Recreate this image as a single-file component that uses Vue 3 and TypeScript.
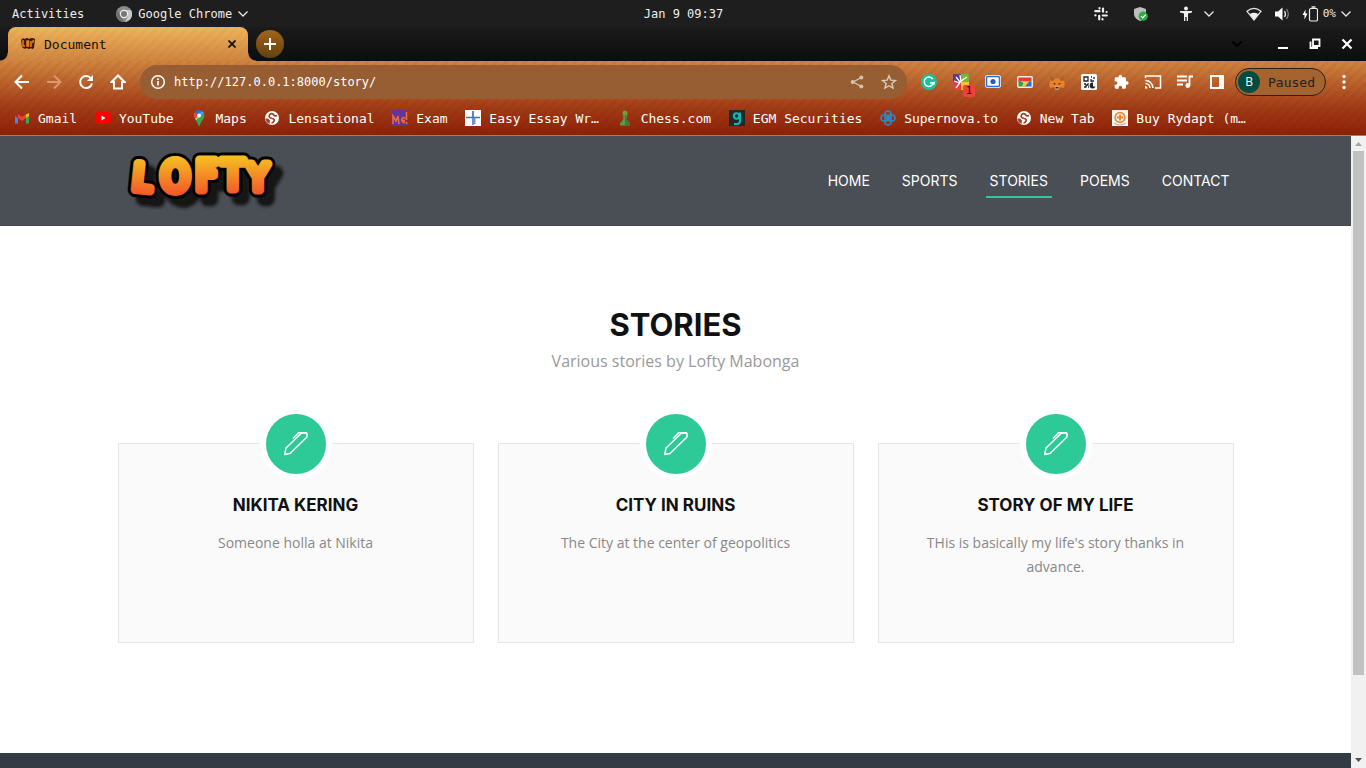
<script setup lang="ts">
import { ref } from 'vue'

interface Bookmark {
  icon: string
  label: string
}

interface Story {
  title: string
  text: string
}

const address = ref('http://127.0.0.1:8000/story/')

const bookmarks: Bookmark[] = [
  { icon: 'gmail', label: 'Gmail' },
  { icon: 'youtube', label: 'YouTube' },
  { icon: 'maps', label: 'Maps' },
  { icon: 'globe', label: 'Lensational' },
  { icon: 'exam', label: 'Exam' },
  { icon: 'essay', label: 'Easy Essay Wr…' },
  { icon: 'chess', label: 'Chess.com' },
  { icon: 'egm', label: 'EGM Securities' },
  { icon: 'supernova', label: 'Supernova.to' },
  { icon: 'globe', label: 'New Tab' },
  { icon: 'rydapt', label: 'Buy Rydapt (m…' },
]

const links: string[] = ['HOME', 'SPORTS', 'STORIES', 'POEMS', 'CONTACT']
const active = ref('STORIES')

const stories: Story[] = [
  { title: 'NIKITA KERING', text: 'Someone holla at Nikita' },
  { title: 'CITY IN RUINS', text: 'The City at the center of geopolitics' },
  { title: 'STORY OF MY LIFE', text: "THis is basically my life's story thanks in advance." },
]
</script>

<template>
  <div class="desktop">
    <header class="system">
      <div class="system-left">
        <button type="button" class="sys-btn">Activities</button>
        <button type="button" class="sys-btn app-menu">
          <svg width="16" height="16" viewBox="0 0 16 16"><circle cx="8" cy="8" r="8" fill="#8a8a8a" /><path d="M8 4h7A8 8 0 0 1 9 16l3-6z" fill="#c9c9c9" /><path d="M1 4l4 6 3 6A8 8 0 0 1 1 4z" fill="#707070" /><circle cx="8" cy="8" r="4.2" fill="#eee" /><circle cx="8" cy="8" r="3" fill="#777" /></svg>
          <span>Google Chrome</span>
          <svg width="10" height="6" viewBox="0 0 10 6"><path d="M.5.5L5 5 9.500.5" fill="none" stroke="#e8e8e8" stroke-width="1.3" /></svg>
        </button>
      </div>
      <time class="clock">Jan 9 09:37</time>
      <div class="system-right">
        <svg class="tray" width="16" height="16" viewBox="0 0 16 16" stroke="#eee" stroke-width="2.2" stroke-linecap="round"><path d="M6.500 2.200v.2M6.500 5.200H2.300M10 2.500v3.200M13.500 6h.1M9.800 9.500h4M9.500 13v.4M6.200 9.800v3.500M2.300 9.300h.2" /></svg>
        <svg class="tray" width="16" height="16" viewBox="0 0 16 16"><path d="M7 1l6 2v5c0 3-2.500 5.500-6 7-3.500-1.500-6-4-6-7V3z" fill="#bdbdbd" /><circle cx="10.200" cy="10.200" r="4.600" fill="#31a846" /><path d="M8 10.200l1.700 1.700 3-3.200" fill="none" stroke="#fff" stroke-width="1.200" /></svg>
        <div class="tray-pair">
          <svg width="14" height="16" viewBox="0 0 14 16" fill="#eee"><circle cx="7" cy="2.500" r="2" /><path d="M1 5h12v1.600L9 7.500V15H7.700v-4H6.300v4H5V7.500L1 6.600z" /></svg>
          <svg width="10" height="6" viewBox="0 0 10 6"><path d="M.5.5L5 5 9.500.5" fill="none" stroke="#e8e8e8" stroke-width="1.300" /></svg>
        </div>
        <button type="button" class="sys-btn status" aria-label="System menu">
          <svg width="16" height="14" viewBox="0 0 16 14"><path d="M1 4.300Q8-1.500 15 4.300L8 13z" fill="none" stroke="#e6e6e6" stroke-width="1.200" /><path d="M3.800 7Q8 4.600 12.200 7L8 12.800z" fill="#f2f2f2" /></svg>
          <svg width="16" height="14" viewBox="0 0 16 14"><path d="M1 4.500h3L8.500.5v13L4 9.500H1z" fill="#fff" /><path d="M10.500 4q2 3 0 6" fill="none" stroke="#eee" stroke-width="1.300" /><path d="M12.500 2q3.500 5 0 10" fill="none" stroke="#888" stroke-width="1.200" /></svg>
          <span class="battery">
            <svg width="16" height="16" viewBox="0 0 16 16"><path d="M3.500 3.500L.5 9h2v4.500l3-6h-2z" fill="#fff" /><rect x="7.500" y="2.500" width="8" height="12.500" rx="1.500" fill="none" stroke="#eee" stroke-width="1.200" /><path d="M9.500 1h4" stroke="#eee" stroke-width="1.500" /></svg>
            <span class="percent">0%</span>
            <svg width="10" height="6" viewBox="0 0 10 6"><path d="M.5.5L5 5 9.500.5" fill="none" stroke="#e8e8e8" stroke-width="1.300" /></svg>
          </span>
        </button>
      </div>
    </header>

    <section class="browser">
      <div class="tabstrip">
        <div class="tab">
          <svg width="16" height="16" viewBox="0 0 16 16"><path d="M1 4q2-3 4-1 2-2 4 0 3-2 6 0l-1 9q-2 2-3 0-2 2-4 0-3 2-5-1z" fill="#3a1c06" /><path d="M3 4v6h2M7 5v5h1.500V5zM11 5v6M13.500 4l-1 3" fill="none" stroke="#ef7d22" stroke-width="1.500" /></svg>
          <span class="tab-title">Document</span>
          <button type="button" class="tab-close" aria-label="Close tab">
            <svg width="8" height="8" viewBox="0 0 8 8"><path d="M.5.5l7 7M7.500.5l-7 7" stroke="#111" stroke-width="1.700" /></svg>
          </button>
        </div>
        <button type="button" class="new-tab" aria-label="New tab">
          <svg width="12" height="12" viewBox="0 0 12 12"><path d="M6 0v12M0 6h12" stroke="#fff" stroke-width="2" /></svg>
        </button>
        <div class="window-buttons">
          <button type="button" class="search-tabs" aria-label="Search tabs">
            <svg width="10" height="6" viewBox="0 0 10 6"><path d="M.5.5L5 5 9.500.5" fill="none" stroke="#000" stroke-width="2" /></svg>
          </button>
          <button type="button" aria-label="Minimize">
            <svg width="12" height="12" viewBox="0 0 12 12"><path d="M1 10h10" stroke="#fff" stroke-width="2" /></svg>
          </button>
          <button type="button" aria-label="Restore">
            <svg width="12" height="12" viewBox="0 0 12 12" fill="none" stroke="#fff" stroke-width="1.800"><path d="M4 1.500h6.500V8H4zM1.500 3.500V10H9" /></svg>
          </button>
          <button type="button" aria-label="Close">
            <svg width="12" height="12" viewBox="0 0 12 12"><path d="M1.500 1.500l9 9M10.500 1.500l-9 9" stroke="#fff" stroke-width="2.200" /></svg>
          </button>
        </div>
      </div>

      <div class="controls">
        <div class="toolbar">
          <button type="button" class="tool" aria-label="Back"><svg width="16" height="16" viewBox="0 0 16 16" fill="none" stroke="#fff" stroke-width="2"><path d="M15 8H2M8 1.500L1.500 8 8 14.500" /></svg></button>
          <button type="button" class="tool" aria-label="Forward"><svg width="16" height="16" viewBox="0 0 16 16" fill="none" stroke="#d99a70" stroke-width="2"><path d="M1 8h13M8 1.500L14.500 8 8 14.500" /></svg></button>
          <button type="button" class="tool" aria-label="Reload"><svg width="16" height="16" viewBox="0 0 16 16"><path d="M13 4.500A6 6 0 1 0 14 9.500" fill="none" stroke="#fff" stroke-width="2" /><path d="M15 1v6H9z" fill="#fff" /></svg></button>
          <button type="button" class="tool" aria-label="Home"><svg width="16" height="16" viewBox="0 0 16 16"><path d="M8 1.500L1.500 8H4v6.500h8V8h2.500z" fill="none" stroke="#fff" stroke-width="2" /></svg></button>

          <div class="omnibox">
            <svg width="16" height="16" viewBox="0 0 16 16"><circle cx="8" cy="8" r="6.300" fill="none" stroke="#fff" stroke-width="1.500" /><path d="M8 7v4.500M8 4.300v1.600" stroke="#fff" stroke-width="1.700" /></svg>
            <input v-model="address" type="text" aria-label="Address" />
            <button type="button" class="tool" aria-label="Share"><svg width="14" height="14" viewBox="0 0 14 14"><path d="M11.500 2.500L3 7l8.500 4.500" fill="none" stroke="#d6c4b3" stroke-width="1.400" /><g fill="#d6c4b3"><circle cx="11.300" cy="2.500" r="2" /><circle cx="2.700" cy="7" r="2" /><circle cx="11.300" cy="11.500" r="2" /></g></svg></button>
            <button type="button" class="tool" aria-label="Bookmark this page"><svg width="16" height="16" viewBox="0 0 16 16"><path d="M8 1.800l1.800 4.300 4.700.4-3.600 3 1.100 4.600L8 11.700 4 14.100l1.100-4.600-3.600-3 4.700-.4z" fill="none" stroke="#dccbbb" stroke-width="1.400" /></svg></button>
          </div>

          <div class="extensions">
            <button type="button" class="tool" aria-label="Grammar"><svg width="16" height="16" viewBox="0 0 16 16"><circle cx="8" cy="8" r="8" fill="#15c39a" /><path d="M11.800 5A4.700 4.700 0 1 0 12.500 9H9" fill="none" stroke="#fff" stroke-width="1.500" /><path d="M10.700 8.500l2.500-.2-.4 2.600" fill="none" stroke="#fff" stroke-width="1.200" /></svg></button>
            <button type="button" class="tool badged" aria-label="Notes, 1 item">
              <svg width="16" height="16" viewBox="0 0 16 16"><path d="M0 0h8v8H0z" fill="#5a3b94" /><path d="M8 0h8v8H8z" fill="#74b82f" /><path d="M0 8h8v8H0z" fill="#ed3b3b" /><path d="M8 8h8v8H8z" fill="#f5c431" /><path d="M3 14l5-7 6-4M8 8L7 1M7 8L3 3M7 9L1 7" stroke="#fff" stroke-width="1.300" fill="none" /></svg>
              <span class="badge">1</span>
            </button>
            <button type="button" class="tool" aria-label="Screenshot"><svg width="16" height="16" viewBox="0 0 16 16"><rect y="1" width="16" height="13" rx="3" fill="#fff" /><rect x="1.500" y="2.500" width="13" height="10" rx="1.500" fill="#fff" stroke="#1a73e8" stroke-width="1.500" /><circle cx="8" cy="7.500" r="2.600" fill="#2f55d0" /></svg></button>
            <button type="button" class="tool" aria-label="Recorder"><svg width="16" height="16" viewBox="0 0 16 16"><rect y="2" width="16" height="12" rx="2" fill="#e8eef0" /><path d="M1.500 3.500h13v4h-13z" fill="#e53c2e" /><path d="M1.500 6.500L7 9v3.500H1.500z" fill="#2d9e4f" /><path d="M7 12.500L12 7.500l2.500 0v5z" fill="#2d6fd2" /><path d="M5 12.500Q6 7 12 7.500l-4 5z" fill="#f7c52c" /></svg></button>
            <button type="button" class="tool" aria-label="Wallet"><svg width="16" height="16" viewBox="0 0 16 16"><path d="M.5.5L6 4.500h4L15.500.5 15 7l1 4-1.500 3-4-1-1 2.500h-3l-1-2.500-4 1L0 11l1-4z" fill="#ea7f24" /><path d="M.5.5L6 4.500 4 7 1 6.500zM15.500.5L10 4.500 12 7l3-.5z" fill="#a9632c" /><path d="M4 9l2.500.5-.5 1.500zM12 9l-2.500.5.5 1.500z" fill="#2d2016" /><path d="M5.500 12.500l1 3h3l1-3z" fill="#dcc5b2" /><path d="M6.500 13h3v1.500h-3z" fill="#261e1a" /></svg></button>
            <button type="button" class="tool" aria-label="QR code"><svg width="16" height="16" viewBox="0 0 16 16"><rect width="16" height="16" rx="1.500" fill="#fff" /><path d="M3 3h4v4H3zM10 3h1M13 3v2M10 5v2h3M3 10h2M7 9v2H5v2H3M7 13h1" fill="none" stroke="#222" stroke-width="1.300" /><path d="M12 8.500a3 3 0 1 0 2.500 4H12z" fill="#222" /></svg></button>
            <button type="button" class="tool" aria-label="Extensions"><svg width="16" height="16" viewBox="0 0 24 24"><path d="M21 11h-1.500V7a2 2 0 0 0-2-2h-4V3.500a2.500 2.500 0 0 0-5 0V5h-4a2 2 0 0 0-2 2v3.800H4a2.700 2.700 0 0 1 0 5.400H2.500V20a2 2 0 0 0 2 2h3.800v-1.500a2.700 2.700 0 0 1 5.400 0V22h3.800a2 2 0 0 0 2-2v-4H21a2.500 2.500 0 0 0 0-5z" fill="#fff" /></svg></button>
            <button type="button" class="tool" aria-label="Cast"><svg width="18" height="16" viewBox="0 0 18 16" fill="none" stroke="#fff" stroke-width="1.500"><path d="M1.500 4V2h15v12H11M1.500 6.500A7.500 7.500 0 0 1 9 14M1.500 9.500A4.500 4.500 0 0 1 6 14" /><path d="M1 12v2.500h2.500A2.500 2.500 0 0 0 1 12z" fill="#fff" stroke="none" /></svg></button>
            <button type="button" class="tool" aria-label="Media controls"><svg width="18" height="16" viewBox="0 0 18 16"><path d="M1 2.500h10M1 6.500h10M1 10.500h6M13.500 11.500v-9H17" fill="none" stroke="#fff" stroke-width="1.800" /><circle cx="11.800" cy="11.500" r="2.400" fill="#fff" /></svg></button>
            <button type="button" class="tool" aria-label="Side panel"><svg width="14" height="14" viewBox="0 0 14 14"><path d="M0 0h14v14H0zM2 2v10h7V2z" fill="#fff" fill-rule="evenodd" /></svg></button>
          </div>

          <button type="button" class="profile"><span class="avatar">B</span><span>Paused</span></button>
          <button type="button" class="more" aria-label="Menu"><svg width="4" height="16" viewBox="0 0 4 16" fill="#fff"><circle cx="2" cy="2.500" r="1.700" /><circle cx="2" cy="8" r="1.700" /><circle cx="2" cy="13.500" r="1.700" /></svg></button>
        </div>

        <nav class="bookmarks" aria-label="Bookmarks">
          <a v-for="mark in bookmarks" :key="mark.label" href="#" class="bookmark">
            <svg width="16" height="16" viewBox="0 0 16 16">
              <g v-if="mark.icon === 'gmail'"><path d="M1 3v10.500h3V7z" fill="#4285f4" /><path d="M15 3v10.500h-3V7z" fill="#34a853" /><path d="M12 4.500L15 3v3l-3 2z" fill="#fbbc04" /><path d="M1 3l3 1.500V8L1 6z" fill="#c5221f" /><path d="M4 4l4 3 4-3v4l-4 3-4-3z" fill="#ea4335" /></g>
              <g v-else-if="mark.icon === 'youtube'"><rect y="2" width="16" height="12" rx="3" fill="#f00" /><path d="M6.500 5.500v5l4-2.500z" fill="#fff" /></g>
              <g v-else-if="mark.icon === 'maps'"><path d="M8 0a5.500 5.500 0 0 0-4.200 2L8 5.500l3-4.500z" fill="#1a73e8" /><path d="M3.800 2q-2.300 3 0 6.500L8 5.500z" fill="#ea4335" /><path d="M11 1L4 8.500l1.500 2.500L13 3z" fill="#4fa0f7" /><path d="M4 8.500l1.300 1.800L9 6z" fill="#fbbc04" /><path d="M13 3q1.500 3-.7 6C9 13 9 16 8 16s-1-3-2.800-5.500z" fill="#34a853" /><circle cx="8" cy="5.500" r="2" fill="#fff" /></g>
              <g v-else-if="mark.icon === 'globe'"><circle cx="8" cy="8" r="7" fill="#fff" /><path d="M13 5.500Q10 6.500 9.500 4.500 7 2.500 5.500 5T8 8.500q3 .5 2 2.500t-2.500 2" fill="none" stroke="#a3401f" stroke-width="1.700" /><path d="M1.500 8.500h2.500l2 2-.5 3.500Q2 12.500 1.500 8.500z" fill="#a3401f" /></g>
              <g v-else-if="mark.icon === 'exam'"><path d="M0 0h16v16H0z" fill="#603798" /><path d="M1 14V6l3 5 2-5 1 8M13 8.500q-1-2-3 0-1 4 3 4M9.500 10.500H13M14.500 2v8M14.500 12v2" fill="none" stroke="#f16a3f" stroke-width="1.500" /></g>
              <g v-else-if="mark.icon === 'essay'"><path d="M0 0h16v16H0z" fill="#fff" /><path d="M8 1v14M1 7.500h14" stroke="#4371b5" stroke-width="1.700" /><path d="M8 8v7M9.500 8v6" stroke="#6c94ca" stroke-width="2" /></g>
              <g v-else-if="mark.icon === 'chess'"><circle cx="8" cy="3" r="2.500" fill="#69a43f" /><path d="M5 5.500h6L9.500 7q0 3.500 3.500 6v2.500H3V13q3.500-2.500 3.500-6z" fill="#5d9948" /><path d="M8 5.500v10h5V13Q9.500 10.500 9.500 7z" fill="#427b35" /></g>
              <g v-else-if="mark.icon === 'egm'"><path d="M0 0h16v16H0z" fill="#22272b" /><circle cx="7.500" cy="6" r="2.700" fill="none" stroke="#0fb9b1" stroke-width="2" /><path d="M11 2.500V11q0 3-3 3H5" fill="none" stroke="#0fb9b1" stroke-width="2" /></g>
              <g v-else-if="mark.icon === 'supernova'" fill="none" stroke="#3187c0" stroke-width="1.600"><rect x="5" y="1" width="6" height="8" rx="3" /><rect x="5" y="7" width="6" height="8" rx="3" /><rect x="1" y="5" width="8" height="6" rx="3" /><rect x="7" y="5" width="8" height="6" rx="3" /></g>
              <g v-else><path d="M0 0h16v16H0z" fill="#f6f6f4" /><circle cx="8" cy="7.500" r="4.800" fill="none" stroke="#e9892d" stroke-width="1.800" /><path d="M8 4.500v6M5 7.500h6" stroke="#e9892d" stroke-width="2" /><path d="M2 13q6 4 12 0" fill="none" stroke="#aaa" /></g>
            </svg>
            <span>{{ mark.label }}</span>
          </a>
        </nav>
      </div>
    </section>

    <div class="viewport">
      <div class="page">
        <header class="site-header">
          <div class="container header-row">
            <a href="#" class="logo" aria-label="Lofty">
              <svg width="168" height="64" viewBox="0 0 168 64">
                <defs>
                  <linearGradient id="flame" gradientUnits="userSpaceOnUse" x1="0" y1="6" x2="0" y2="48">
                    <stop offset="0" stop-color="#f5c421" />
                    <stop offset="1" stop-color="#f4502a" />
                  </linearGradient>
                  <filter id="soft" x="-10%" y="-20%" width="130%" height="150%"><feGaussianBlur stdDeviation="1.500" /></filter>
                  <g id="word">
                    <text x="14" y="41" font-size="36" transform="rotate(6 20 40)">L</text>
                    <text x="43" y="42" font-size="40">O</text>
                    <text x="78" y="41" font-size="40">F</text>
                    <text x="104" y="40" font-size="39">T</text>
                    <text x="130" y="41" font-size="36">Y</text>
                  </g>
                </defs>
                <g class="lofty">
                  <use href="#word" x="8" y="9" fill="#151618" stroke="#151618" stroke-width="15" filter="url(#soft)" />
                  <use href="#word" fill="#000" stroke="#000" stroke-width="15" />
                  <use href="#word" fill="url(#flame)" stroke="url(#flame)" stroke-width="9" />
                </g>
              </svg>
            </a>
            <nav class="menu" aria-label="Main">
              <a v-for="link in links" :key="link" href="#" :class="{ active: link === active }" @click.prevent="active = link">{{ link }}</a>
            </nav>
          </div>
        </header>

        <main class="container stories">
          <h2>STORIES</h2>
          <p class="lead">Various stories by Lofty Mabonga</p>
          <div class="grid">
            <article v-for="story in stories" :key="story.title" class="card">
              <div class="card-icon">
                <svg width="24" height="24" viewBox="0 0 24 24" fill="none" stroke="#fff" stroke-width="1.500" stroke-linejoin="round"><path d="M.7 22.500L2 16 16.500 2Q18 .8 20 .8L23 1.500V5L6 21.500z" /><path d="M9 6.500L14.500.8H23" /></svg>
              </div>
              <h3>{{ story.title }}</h3>
              <p>{{ story.text }}</p>
            </article>
          </div>
        </main>

        <footer class="site-footer"></footer>
      </div>

      <div class="scrollbar" aria-hidden="true">
        <svg width="7" height="4" viewBox="0 0 7 4"><path d="M0 4L3.500 0 7 4z" fill="#a3a3a3" /></svg>
        <div class="track"><div class="thumb"></div></div>
        <svg width="7" height="4" viewBox="0 0 7 4"><path d="M0 0h7L3.500 4z" fill="#505050" /></svg>
      </div>
    </div>
  </div>
</template>

<style>
body {
  margin: 0;
}
</style>

<style scoped>
.desktop {
  display: flex;
  flex-direction: column;
  min-height: 100vh;
  font-family: "DejaVu Sans Mono", monospace;
  background: #fff;
}

svg {
  display: block;
  flex: none;
}

button {
  font: inherit;
  color: inherit;
  background: none;
  border: 0;
  padding: 0;
}

a {
  color: inherit;
  text-decoration: none;
}

.system {
  display: grid;
  grid-template-columns: 1fr auto 1fr;
  align-items: center;
  height: 27px;
  padding: 0 15px 0 12px;
  background: #1e1e1e;
  color: #eee;
  font-size: 12px;
}

.clock {
  padding-left: 4px;
}

.system-left,
.system-right,
.app-menu,
.tray-pair,
.status,
.battery {
  display: flex;
  align-items: center;
}

.system-left {
  gap: 32px;
}

.app-menu {
  gap: 6px;
}

.system-right {
  justify-content: flex-end;
}

.tray {
  margin-right: 24px;
}

.tray-pair {
  gap: 11px;
  margin: 0 32px 0 6px;
}

.status {
  gap: 12px;
}

.battery {
  gap: 5px;
}

.percent {
  font-size: 11px;
}

.tabstrip {
  display: flex;
  height: 34px;
  padding: 0 3px 0 8px;
  align-items: center;
  background: linear-gradient(#1a1a1a, #0d0d0d);
}

.tab {
  position: relative;
  display: flex;
  align-items: center;
  gap: 8px;
  width: 240px;
  height: 34px;
  padding: 0 10px 0 12px;
  box-sizing: border-box;
  border-radius: 8px 8px 0 0;
  background: repeating-linear-gradient(135deg, rgba(150, 70, 10, 0.05) 0 3px, transparent 3px 7px), linear-gradient(#efb45c, #ce8440);
  color: #111;
  font-size: 13px;
}

.tab::before,
.tab::after {
  content: "";
  position: absolute;
  bottom: 0;
  width: 8px;
  height: 8px;
}

.tab::before {
  right: 100%;
  background: radial-gradient(circle at 0 0, transparent 7px, #ce8440 8px);
}

.tab::after {
  left: 100%;
  background: radial-gradient(circle at 100% 0, transparent 7px, #ce8440 8px);
}

.tab-title {
  flex: 1;
}

.tab-close {
  display: grid;
  place-items: center;
  width: 12px;
  height: 16px;
}

.new-tab {
  display: grid;
  place-items: center;
  width: 28px;
  height: 28px;
  margin-left: 8px;
  border-radius: 50%;
  background: linear-gradient(#a0661a, #64400e);
}

.window-buttons {
  display: flex;
  margin-left: auto;
}

.window-buttons button {
  display: grid;
  place-items: center;
  width: 32px;
  height: 32px;
}

.window-buttons .search-tabs {
  margin-right: 14px;
}

.controls {
  border-bottom: 1px solid #b87a56;
  background: repeating-linear-gradient(135deg, rgba(90, 20, 0, 0.06) 0 3px, transparent 3px 7px), linear-gradient(#d08540, #b85f2b 32%, #a03a15 64%, #8e2008);
  color: #fff;
}

.toolbar {
  display: flex;
  align-items: center;
  height: 42px;
  padding: 0 14px 0 6px;
}

.tool {
  display: grid;
  place-items: center;
  flex: none;
  width: 32px;
  height: 32px;
}

.omnibox {
  display: flex;
  align-items: center;
  flex: 1;
  min-width: 0;
  height: 34px;
  margin: 0 6px;
  padding: 0 2px 0 10px;
  border-radius: 17px;
  background: #965e32;
}

.omnibox input {
  flex: 1;
  min-width: 0;
  padding: 0 8px;
  border: 0;
  outline: 0;
  background: none;
  color: #fff;
  font: 12px "DejaVu Sans Mono", monospace;
}

.extensions {
  display: flex;
}

.badged {
  position: relative;
}

.badge {
  position: absolute;
  right: 2px;
  bottom: 1px;
  width: 12px;
  border-radius: 2px;
  background: #f04040;
  color: #300;
  font-size: 10px;
  line-height: 12px;
  text-align: center;
}

.profile {
  display: flex;
  align-items: center;
  gap: 8px;
  height: 28px;
  margin-left: 2px;
  padding: 0 10px 0 2px;
  box-sizing: border-box;
  border: 1px solid #222;
  border-radius: 14px;
  background: #a4632f;
  color: #222;
  font-size: 13px;
}

.avatar {
  width: 22px;
  border-radius: 50%;
  background: #004d40;
  color: #fff;
  font: 12px/22px "Open Sans", sans-serif;
  text-align: center;
}

.more {
  display: grid;
  place-items: center;
  width: 16px;
  height: 28px;
  margin-left: 10px;
}

.bookmarks {
  display: flex;
  justify-content: space-between;
  align-items: center;
  height: 30px;
  padding: 0 120px 2px 14px;
  font-size: 13px;
}

.bookmark {
  display: flex;
  align-items: center;
  gap: 8px;
  white-space: nowrap;
}

.viewport {
  display: flex;
  flex: 1;
}

.page {
  display: flex;
  flex: 1;
  flex-direction: column;
  min-width: 0;
  font-family: "Open Sans", sans-serif;
}

.container {
  width: 100%;
  max-width: 1140px;
  margin: 0 auto;
  padding: 0 12px;
  box-sizing: border-box;
}

.site-header {
  background: #4a4e55;
  border-bottom: 1px solid #44464b;
}

.header-row {
  display: flex;
  align-items: center;
  justify-content: space-between;
  height: 89px;
}

.lofty {
  font-family: "DejaVu Sans Condensed", "DejaVu Sans", sans-serif;
  font-weight: 400;
  stroke-linejoin: round;
}

.menu {
  display: flex;
  gap: 24px;
  color: #fff;
  font: 14px/24px Inter, sans-serif;
}

.menu a {
  padding: 3px 4px;
  border: solid transparent;
  border-width: 2px 0;
}

.menu .active {
  border-bottom-color: #2dca98;
}

.stories {
  flex: none;
  padding-top: 79px;
  padding-bottom: 110px;
  text-align: center;
}

h2,
h3,
p {
  margin: 0;
}

h2 {
  color: #111;
  font: 700 31px/40px Inter, sans-serif;
}

.lead {
  margin-top: 4px;
  color: #999;
  font-size: 16px;
  line-height: 24px;
}

.grid {
  display: grid;
  grid-template-columns: repeat(3, 1fr);
  gap: 24px;
  margin-top: 70px;
}

.card {
  min-height: 200px;
  padding: 0 30px 30px;
  box-sizing: border-box;
  border: 1px solid #e4e6e8;
  background: #fafafa;
}

.card-icon {
  display: grid;
  place-items: center;
  width: 60px;
  height: 60px;
  margin: -36px auto 0;
  border: 6px solid #fff;
  border-radius: 50%;
  background: #2dca98;
}

.card h3 {
  margin-top: 13px;
  color: #111;
  font: 700 17px/24px Inter, sans-serif;
}

.card p {
  margin-top: 14px;
  color: #888;
  font-size: 14px;
  line-height: 24px;
}

.site-footer {
  flex: 1;
  min-height: 15px;
  background: #343b42;
}

.scrollbar {
  display: flex;
  flex-direction: column;
  align-items: center;
  gap: 5px;
  width: 15px;
  padding: 6px 0;
  box-sizing: border-box;
  background: #f1f1f1;
}

.track {
  flex: 1;
  width: 11px;
}

.thumb {
  height: 87%;
  background: #c1c1c1;
}
</style>
